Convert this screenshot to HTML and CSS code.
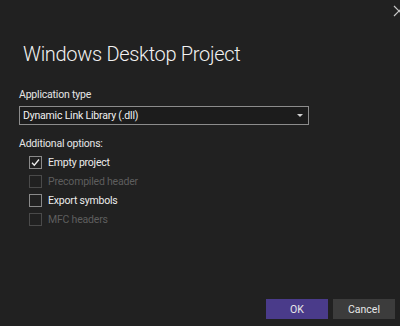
FILE: index.html
```html
<!DOCTYPE html>
<html>
<head>
<meta charset="utf-8">
<link rel="stylesheet" href="styles.css">
</head>
<body>
<div class="dialog">
  <button class="close" aria-label="Close">
    <svg width="12" height="12" viewBox="0 0 12 12"><path d="M1 1L11 11M11 1L1 11" stroke="#c8c8c8" stroke-width="1.2" fill="none"/></svg>
  </button>
  <h1 class="title">Windows Desktop Project</h1>
  <div class="field">
    <label class="label">Application type</label>
    <div class="select">
      <span>Dynamic Link Library (.dll)</span>
      <svg class="caret" width="6" height="4" viewBox="0 0 6 4"><path d="M0 0H6L3 3Z" fill="#d0d0d0"/></svg>
    </div>
  </div>
  <div class="field options">
    <div class="label">Additional options:</div>
    <ul class="checks">
      <li class="check"><span class="box"><svg width="11" height="11" viewBox="0 0 11 11"><path d="M2 5.8L4.3 8.2L9 2.5" stroke="#f0f0f0" stroke-width="1.3" fill="none"/></svg></span>Empty project</li>
      <li class="check disabled"><span class="box"></span>Precompiled header</li>
      <li class="check"><span class="box"></span>Export symbols</li>
      <li class="check disabled"><span class="box"></span>MFC headers</li>
    </ul>
  </div>
  <div class="footer">
    <button class="btn primary">OK</button>
    <button class="btn">Cancel</button>
  </div>
</div>
</body>
</html>
```
FILE: styles.css
```css
* { box-sizing: border-box; }
html, body { margin: 0; padding: 0; }
body {
  background: #212121;
  font-family: "Roboto", "Noto Sans", sans-serif;
  color: #e6e6e6;
}
.dialog {
  position: relative;
  width: 400px;
  height: 326px;
  display: flex;
  flex-direction: column;
  padding: 0 5px 7px 19px;
}
.close {
  position: absolute;
  top: 5px;
  right: -5px;
  border: 0;
  background: none;
  padding: 0;
  width: 12px;
  height: 12px;
  display: flex;
}
.title {
  margin: 39px 0 0 4px;
  font-weight: 300;
  font-size: 20px;
  letter-spacing: -0.3px;
  line-height: 30px;
  color: #f2f2f2;
}
.field { margin-top: 19px; }
.label {
  display: block;
  font-size: 10.5px;
  letter-spacing: -0.2px;
  line-height: 14px;
  color: #e6e6e6;
}
.select {
  margin-top: 4px;
  width: 290px;
  height: 19px;
  border: 1px solid #8c8c8c;
  background: #1c1c1c;
  display: flex;
  align-items: center;
  justify-content: space-between;
  padding: 0 5px 0 3px;
  font-size: 10.5px;
  letter-spacing: -0.2px;
  color: #f0f0f0;
}
.options { margin-top: 12px; }
.checks {
  list-style: none;
  margin: 5px 0 0 0;
  padding: 0 0 0 10px;
  display: flex;
  flex-direction: column;
  gap: 6px;
}
.check {
  display: flex;
  align-items: center;
  gap: 6px;
  font-size: 10.5px;
  letter-spacing: -0.2px;
  line-height: 13px;
  color: #ececec;
}
.box {
  width: 13px;
  height: 13px;
  border: 1px solid #8a8a8a;
  display: flex;
  align-items: center;
  justify-content: center;
}
.disabled { color: #5e5e5e; }
.disabled .box { border-color: #4a4a4a; }
.footer {
  margin-top: auto;
  display: flex;
  justify-content: flex-end;
  gap: 5px;
}
.btn {
  width: 62px;
  height: 20px;
  border: 0;
  padding: 0;
  background: #3c3c3c;
  color: #e8e8e8;
  font-family: inherit;
  font-size: 10.5px;
}
.btn.primary { background: #4a3b8a; }
```
